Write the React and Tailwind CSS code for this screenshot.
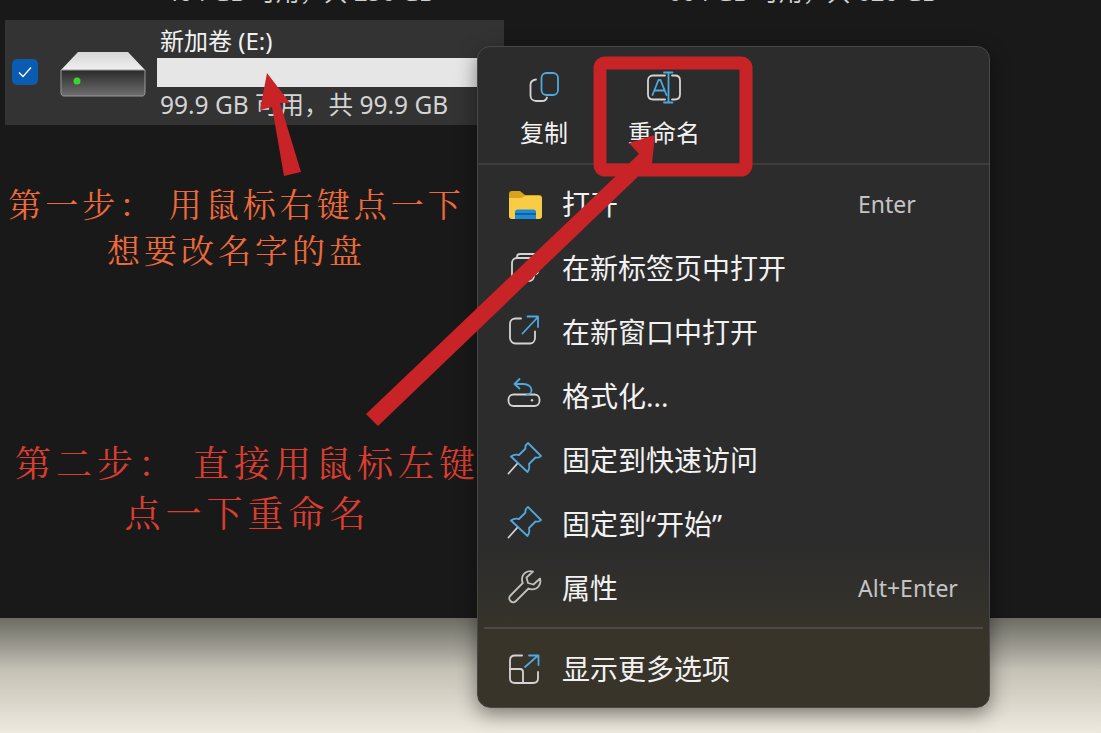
const sans = "font-['Noto_Sans','Noto_Sans_CJK_SC',sans-serif]";

function Duo({ children, className = "w-[36px] h-[36px]", viewBox = "0 0 36 36" }) {
  return (
    <svg viewBox={viewBox} className={className} fill="none" strokeWidth="1.800" strokeLinecap="round" strokeLinejoin="round">
      {children}
    </svg>
  );
}
const G = "#d4d4d4";
const B = "#4fa8de";

const icons = {
  copy: (
    <Duo>
      <path d="M10 8.500c-3 .3-5.500 2.300-5.500 5.500v10.500c0 3.200 2.300 5.500 5.500 5.500h6c2.500 0 4.500-1.500 5-3.500" stroke={G} />
      <rect x="15.500" y="2" width="16.500" height="22" rx="5" stroke={B} />
    </Duo>
  ),
  rename: (
    <Duo>
      <path d="M19 4.500H7c-3 0-5 2-5 5v14c0 3 2 5 5 5h12" stroke={G} />
      <path d="M26 4.500h3c3 0 5 2 5 5v14c0 3-2 5-5 5h-3" stroke={G} />
      <path d="M6.500 24L12.500 9h2l6 15M8.500 19.500h10" stroke={B} />
      <path d="M18 1.500h8.500M22.500 1.500v30M18 31.500h8.500" stroke={B} />
    </Duo>
  ),
  tab: (
    <Duo>
      <rect x="5" y="8" width="22" height="23" rx="5" stroke={G} />
      <path d="M10 8V7c0-2 1.500-3 3-3h14c2.500 0 4 1.500 4 4v13c0 2-1 3-3 3" stroke={G} />
    </Duo>
  ),
  window: (
    <Duo>
      <path d="M14 4.500H8.500c-3 0-5.500 2.200-5.500 5.200v14.300c0 3 2.500 5.500 5.500 5.500h14.300c3 0 5.200-2.500 5.200-5.500v-6.500" stroke={G} />
      <path d="M15.500 19.500L31 3M20.500 2.500h10.500V13" stroke={B} />
    </Duo>
  ),
  format: (
    <Duo>
      <rect x="1.500" y="16.500" width="31" height="11.500" rx="5" stroke={G} />
      <circle cx="25" cy="22.300" r="1.200" fill={G} />
      <path d="M12.500 1L7.500 6l5 4.500M7.500 6h9c4.500 0 8 2.500 8 6 0 2.500-2 4.500-4.500 4.500" stroke={B} />
    </Duo>
  ),
  pin: (
    <Duo>
      <path d="M21 1l13 13c-1 1.500-3 2-5.500 1.500L22 22c.8 3.500 0 6-1.500 8L4 14.500c2-1.500 5-2.200 8-1.500l6.500-6.500C18 4 19.500 2 21 1z" stroke={B} />
      <path d="M10 22L1.500 31.500" stroke={G} />
    </Duo>
  ),
  wrench: (
    <Duo>
      <path d="M33 8.500l-6.500 6-5.500-1.500-1.500-5.500 6.500-6c-5-1.500-11 1.500-11 8 0 1.500.3 2.500.8 3.500L3.500 25.500c-2 2-1.500 4 0 5.500s3.500 2 5.500 0l12.500-12.500c1 .5 2 .8 3.500.8 6.500 0 9.500-6 8-10.800z" stroke="#c0c0c0" />
    </Duo>
  ),
  more: (
    <Duo>
      <path d="M15 4.500H8C5 4.500 3 6.500 3 9.500v18C3 30.500 5 32 8 32h18c3 0 5-1.500 5-4.500V21" stroke={G} />
      <path d="M3 18h10c2 0 3 1 3 3v11" stroke={G} />
      <path d="M18 16L31 4.500M22 4.500h9.500V14" stroke={B} />
    </Duo>
  ),
  folder: (
    <svg viewBox="0 0 33 29" className="w-[33px] h-[29px]">
      <path d="M0 4c0-2 1-3 3-3h8l5 4h14c2 0 3 1 3 3v4H0z" fill="#d8a31c" />
      <path d="M0 8h12l4-2h14c2 0 3 1 3 3v17c0 2-1 3-3 3H3c-2 0-3-1-3-3z" fill="#f8cd45" />
      <path d="M6 29v-7c0-1.500 1-2.500 2.500-2.500h16c1.500 0 2.500 1 2.500 2.500v7z" fill="#1f8ad6" />
      <rect x="6" y="23" width="21" height="2" fill="#0f5fa8" />
    </svg>
  ),
};

const rows = [
  ["folder", "打开", "Enter"],
  ["tab", "在新标签页中打开"],
  ["window", "在新窗口中打开"],
  ["format", "格式化..."],
  ["pin", "固定到快速访问"],
  ["pin", "固定到“开始”"],
  ["wrench", "属性", "Alt+Enter"],
];

function Row({ icon, label, hint }) {
  return (
    <div className="h-[64px] flex items-center pl-[29px] pr-[30px]">
      <span className="w-[36px] h-[36px] flex items-center justify-center shrink-0">{icons[icon]}</span>
      <span className="ml-[19px] text-[28px] leading-none text-[#f2f2f2] whitespace-nowrap">{label}</span>
      {hint && <span className="ml-auto w-[101px] text-[23px] leading-none text-[#c4c4c4] whitespace-nowrap">{hint}</span>}
    </div>
  );
}

function Drive() {
  return (
    <svg viewBox="0 0 86 46" className="w-[86px] h-[46px]">
      <defs>
        <linearGradient id="dt" x1="0" y1="0" x2="0" y2="1">
          <stop offset="0" stopColor="#d6d6d6" />
          <stop offset="1" stopColor="#f0f0f0" />
        </linearGradient>
        <linearGradient id="db" x1="0" y1="0" x2="0" y2="1">
          <stop offset="0" stopColor="#2a2a2a" />
          <stop offset="1" stopColor="#6e6e6e" />
        </linearGradient>
      </defs>
      <path d="M1 19L18 1h50l17 18z" fill="url(#dt)" />
      <path d="M1 19h84v22c0 3-1 4-3 4H4c-2 0-3-1-3-4z" fill="url(#db)" stroke="#9a9a9a" />
      <circle cx="17" cy="30" r="3.500" fill="#38d62f" />
    </svg>
  );
}

export default function App() {
  return (
    <div className={`${sans} relative w-[1101px] h-[733px] overflow-hidden flex flex-col bg-[#191919]`}>
      <div className="h-[618px] bg-[#191919] relative">
        <div className="h-[20px] overflow-hidden text-[24px] leading-none text-[#cfcfcf]">
          <div className="flex pl-[165px] -mt-[20px] whitespace-nowrap">
            <span className="w-[503px]">404 GB 可用，共 256 GB</span>
            <span>604 GB 可用，共 620 GB</span>
          </div>
        </div>

        <div className="ml-[5px] w-[499px] h-[105px] bg-[#333333] flex items-center">
          <span className="ml-[7px] -mt-[1px] w-[26px] h-[26px] rounded-[5px] bg-[#0b5cb0] flex items-center justify-center">
            <svg viewBox="0 0 16 16" className="w-[16px] h-[16px]" fill="none" stroke="#fff" strokeWidth="1.300">
              <path d="M2 8.500l4 4 8-9" />
            </svg>
          </span>
          <span className="ml-[22px] mt-[2px]"><Drive /></span>
          <div className="ml-[11px] flex-1 flex flex-col self-start pt-[4px]">
            <span className="text-[24px] leading-[34px] text-[#f2f2f2] pl-[3px]">新加卷 (E:)</span>
            <div className="h-[29px] bg-[#e6e6e6]" />
            <span className="text-[24.500px] leading-[36px] text-[#d4d4d4] pl-[3px] whitespace-nowrap">99.9 GB 可用，共 99.9 GB</span>
          </div>
        </div>

        <div className="mt-[55px] text-center w-[473px] text-[33px] leading-[46px] tracking-[4px] font-['Noto_Serif_CJK_SC','Noto_Sans_CJK_SC',serif] text-[#ee6a3c]">
          <div className="whitespace-nowrap">第一步： 用鼠标右键点一下</div>
          <div className="whitespace-nowrap">想要改名字的盘</div>
        </div>

        <div className="mt-[165px] text-center w-[495px] text-[36px] leading-[50px] tracking-[5px] font-['Noto_Serif_CJK_SC','Noto_Sans_CJK_SC',serif] text-[#dc3d30]">
          <div className="whitespace-nowrap">第二步： 直接用鼠标左键</div>
          <div className="whitespace-nowrap">点一下重命名</div>
        </div>
      </div>

      <div className="flex-1 bg-gradient-to-b from-[#6d6c64] via-[#c4c1b5] via-[45%] to-[#efeadf]" />

      <div className="absolute left-[477px] top-[46px] w-[513px] h-[662px] rounded-[13px] border border-[#48484a] bg-[linear-gradient(180deg,#2c2c2c_0%,#2c2c2c_76%,#38342a_90%,#38342a_100%)] shadow-[0_6px_20px_rgba(0,0,0,0.45)] flex flex-col">
        <div className="h-[118px] border-b-2 border-[#3c3c3c] flex">
          <div className="w-[132px] flex flex-col items-center pt-[24px]">
            {icons.copy}
            <span className="mt-[14px] text-[24px] leading-none text-[#f2f2f2]">复制</span>
          </div>
          <div className="w-[108px] flex flex-col items-center pt-[24px]">
            {icons.rename}
            <span className="mt-[14px] text-[24px] leading-none text-[#f2f2f2]">重命名</span>
          </div>
        </div>
        <div className="pt-[7px]">
          {rows.map(([i, l, h], n) => <Row key={n} icon={i} label={l} hint={h} />)}
        </div>
        <div className="mx-[6px] mt-[7px] h-[2px] bg-[#4c4a45]" />
        <div className="mt-[8px]"><Row icon="more" label="显示更多选项" /></div>
      </div>

      <svg className="absolute left-0 top-0 w-[1101px] h-[733px] pointer-events-none" viewBox="0 0 1101 733" fill="none">
        <rect x="600" y="63" width="146" height="107" rx="5" stroke="#c82327" strokeWidth="13" />
        <path d="M267 73L290 103 280 103 301 172 284 176 272 107 260 110z" fill="#c82327" />
        <path d="M655 135L629 143 639 154 366 414 378 426 648 167 651 173z" fill="#c82327" />
      </svg>
    </div>
  );
}
